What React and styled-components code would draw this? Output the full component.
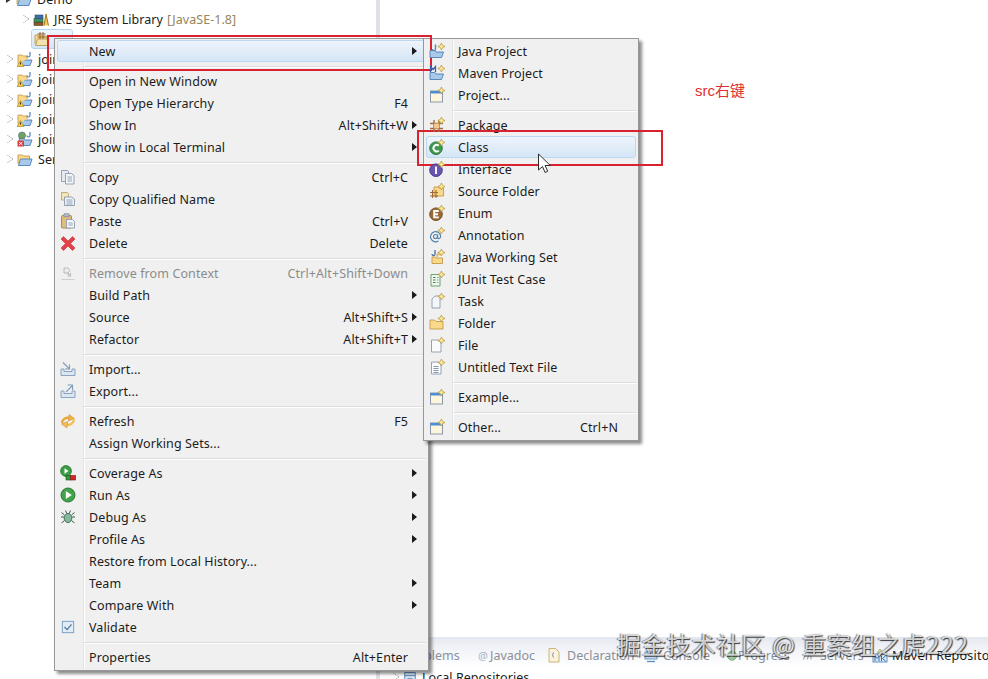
import React from "react";
import styled, { createGlobalStyle } from "styled-components";

const GlobalStyle = createGlobalStyle`
  html, body {
    margin: 0;
    padding: 0;
    background: #fff;
  }
  body {
    font-family: "Noto Sans", "Noto Sans CJK SC", sans-serif;
    font-size: 12.5px;
    color: #1c1c1c;
  }
`;

const Workbench = styled.div`
  position: relative;
  display: flex;
  width: 988px;
  height: 679px;
  overflow: hidden;
  background: #fff;
`;

const TreePanel = styled.div`
  width: 376px;
  flex: none;
  margin-top: -11px;
`;

const TreeRow = styled.div`
  display: flex;
  align-items: center;
  height: 20px;
  padding-left: ${(p) => p.$indent}px;
  white-space: nowrap;
`;

const Twisty = styled.span`
  width: 0;
  height: 0;
  margin-right: 4px;
  border-left: 6px solid ${(p) => (p.$open ? "#333" : "#fff")};
  border-top: 4px solid transparent;
  border-bottom: 4px solid transparent;
  filter: ${(p) => (p.$open ? "none" : "drop-shadow(0 0 0.6px #6d6d6d) drop-shadow(0 0 0.4px #6d6d6d)")};
`;

const TreeLabel = styled.span`
  margin-left: 5px;
  font-size: 12.5px;
  letter-spacing: 0.05px;
`;

const Decoration = styled.span`
  margin-left: 4px;
  font-size: 12.5px;
  letter-spacing: 0.05px;
  color: #96865a;
`;

const SelectedBox = styled.div`
  display: flex;
  align-items: center;
  width: 42px;
  height: 20px;
  padding-left: 2px;
  box-sizing: border-box;
  border: 1px solid #b7d4ee;
  border-radius: 3px;
  background: linear-gradient(#eef6fd, #d4e7f8);
`;

const Sash = styled.div`
  width: 4px;
  flex: none;
  background: #dfe1e8;
`;

const RightColumn = styled.div`
  flex: 1;
  display: flex;
  flex-direction: column;
  min-width: 0;
`;

const Editor = styled.div`
  height: 637px;
  flex: none;
  padding: 81px 0 0 315px;
  box-sizing: border-box;
`;

const Note = styled.div`
  font-family: "Liberation Sans", "Noto Sans CJK SC", sans-serif;
  font-size: 15px;
  line-height: 19px;
  color: #e0312f;
`;

const ViewTabs = styled.div`
  height: 30px;
  flex: none;
  display: flex;
  align-items: center;
  padding: 6px 0 0 24px;
  box-sizing: border-box;
  background: linear-gradient(#e4e7f0 0, #eff1f6 30%, #ffffff 100%);
  white-space: nowrap;
`;

const ViewTab = styled.div`
  display: flex;
  align-items: center;
  flex: none;
  width: ${(p) => p.$width}px;
  gap: ${(p) => p.$gap ?? 4}px;
  font-size: 12.5px;
  letter-spacing: ${(p) => (p.$active ? "0.25px" : "0")};
  color: ${(p) => (p.$active ? "#1c1c1c" : "#8b909a")};
`;

const AtSign = styled.span`
  width: 11px;
  font-size: 11px;
  color: #a9b4c6;
`;

const ViewBody = styled.div`
  flex: 1;
  padding-left: 13px;
`;

const BodyRow = styled.div`
  display: flex;
  align-items: center;
  height: 18px;
  margin-top: 1px;
  white-space: nowrap;
`;

const Popup = styled.div`
  position: absolute;
  left: ${(p) => p.$left}px;
  top: 38px;
  width: ${(p) => p.$width}px;
  box-sizing: border-box;
  padding: 1px 2px 2px;
  background: #f0f0f0;
  border: 1px solid #979797;
  box-shadow: 3px 3px 3px rgba(0, 0, 0, 0.45);

  &::before {
    content: "";
    position: absolute;
    top: 1px;
    bottom: 1px;
    left: 28px;
    width: 1px;
    background: #e2e3e3;
    box-shadow: 1px 0 0 #fff;
  }
`;

const Item = styled.div`
  position: relative;
  display: grid;
  grid-template-columns: 20px 1fr auto;
  align-items: center;
  column-gap: 11px;
  height: 22px;
  box-sizing: border-box;
  padding-right: 17px;
  border: 1px solid ${(p) => (p.$active ? "#bcd7f0" : "transparent")};
  border-radius: 3px;
  background: ${(p) => (p.$active ? "linear-gradient(#eef4fb, #d5e6f7)" : "transparent")};
  color: ${(p) => (p.$disabled ? "#8c8c8c" : "#1c1c1c")};
  letter-spacing: 0.1px;
  white-space: nowrap;
`;

const IconCell = styled.span`
  display: flex;
  justify-content: center;
  align-items: center;
  z-index: 1;
`;

const Shortcut = styled.span`
  color: inherit;
`;

const Arrow = styled.span`
  position: absolute;
  right: 8px;
  top: 6px;
  width: 0;
  height: 0;
  border-left: 5px solid #1a1a1a;
  border-top: 4px solid transparent;
  border-bottom: 4px solid transparent;
`;

const Separator = styled.div`
  height: 8px;
  margin-left: 27px;
  position: relative;

  &::after {
    content: "";
    position: absolute;
    left: 0;
    right: 0;
    top: 4px;
    height: 1px;
    background: #dcdcdc;
    box-shadow: 0 1px 0 #fff;
  }
`;

const RedFrame = styled.div`
  position: absolute;
  left: ${(p) => p.$left}px;
  top: ${(p) => p.$top}px;
  width: ${(p) => p.$width}px;
  height: ${(p) => p.$height}px;
  box-sizing: border-box;
  border: 2px solid #d8222f;
`;

const Pointer = styled.svg`
  position: absolute;
  left: 537px;
  top: 153px;
`;

const Watermark = styled.div`
  position: absolute;
  left: 617px;
  top: 627px;
  font-family: "Noto Sans CJK SC", sans-serif;
  font-size: 24px;
  line-height: 34px;
  letter-spacing: 0.85px;
  white-space: nowrap;
  color: rgba(255, 255, 255, 0.75);
  text-shadow: 1px 1px 1px rgba(0, 0, 0, 0.75), -1px 0 1px rgba(0, 0, 0, 0.5);
`;

const GlyphSvg = styled.svg`
  display: block;
  flex: none;
`;

const Glyph = ({ children, size = 16 }) => (
  <GlyphSvg width={size} height={size} viewBox="0 0 16 16">
    {children}
  </GlyphSvg>
);

const Spark = () => (
  <path
    d="M12.4 0l1.1 2.4 2.5 1.1-2.5 1.1-1.1 2.4-1.1-2.4-2.5-1.1 2.5-1.1z"
    fill="#fcec9c"
    stroke="#b8922f"
    strokeWidth="0.7"
  />
);

const BlueFolder = () => (
  <path
    d="M1 14.5V7.5h5l1 1.5h7.5l-2 5.5z"
    fill="#a9c9ea"
    stroke="#4f7fb5"
    strokeWidth="0.9"
  />
);

const OrangeFolder = ({ d = "M1 14V5h4.5l1.5 1.5h7V14z" }) => (
  <path d={d} fill="#fbd98b" stroke="#c39a47" strokeWidth="0.9" />
);

const PageShape = ({ fill = "#fafbfd", stroke = "#8c98ab" }) => (
  <path d="M2.5 15V3h6.5l3 3v9z" fill={fill} stroke={stroke} strokeWidth="0.9" />
);

const WindowShape = () => (
  <g>
    <rect x="1.5" y="4" width="12" height="11" fill="#fdf6dc" stroke="#7f8ea3" strokeWidth="0.9" />
    <rect x="1.5" y="4" width="12" height="2.5" fill="#4c8fd8" />
  </g>
);

const Badge = ({ fill, stroke, mark }) => (
  <g>
    <circle cx="7" cy="9.2" r="6.3" fill={fill} stroke={stroke} strokeWidth="0.9" />
    <path d={mark} fill="none" stroke="#fff" strokeWidth="1.9" />
    <Spark />
  </g>
);

const WarnFolder = () => (
  <Glyph>
    <path d="M1 7.5h5l1 1.5h8l-2 5.5H4z" fill="#a9c9ea" stroke="#4f7fb5" strokeWidth="0.9" />
    <path d="M1 13V4h4l1 1h4v3" fill="#fbd98b" stroke="#c39a47" strokeWidth="0.8" />
    <path d="M13 1v3.5a1.5 1.5 0 0 1-3 0" fill="none" stroke="#4f7fb5" strokeWidth="1.2" />
    <path d="M3.5 9.5L7 15.5H0z" fill="#f6c845" stroke="#a07a18" strokeWidth="0.6" />
    <path d="M3.5 11.5v2" stroke="#222" strokeWidth="0.9" />
  </Glyph>
);

const ErrorGlobeFolder = () => (
  <Glyph>
    <path d="M2 7.5h5l1 1.5h7l-2 5.5H4z" fill="#a9c9ea" stroke="#4f7fb5" strokeWidth="0.9" />
    <circle cx="5" cy="4.5" r="3.5" fill="#6fa35e" stroke="#55708c" strokeWidth="0.7" />
    <path d="M13 1v3.5a1.5 1.5 0 0 1-3 0" fill="none" stroke="#4f7fb5" strokeWidth="1.2" />
    <rect x="0.5" y="9.5" width="6.5" height="6" fill="#d93a3a" />
    <path d="M2 11l3.5 3M5.5 11L2 14" stroke="#fff" strokeWidth="1" />
  </Glyph>
);

const PlainProject = () => (
  <Glyph>
    <path d="M1 13V4h4.5l1 1h6v3" fill="#fbd98b" stroke="#c39a47" strokeWidth="0.9" />
    <path d="M1.5 14.5l2-6.5h11.5l-2 6.5z" fill="#a9c9ea" stroke="#4f7fb5" strokeWidth="0.9" />
  </Glyph>
);

const LibraryBooks = () => (
  <Glyph>
    <rect x="1" y="11" width="9" height="3.5" fill="#8a5a2b" stroke="#5d3b19" strokeWidth="0.6" />
    <rect x="1" y="7.5" width="9" height="3.5" fill="#3f8f5f" stroke="#28603f" strokeWidth="0.6" />
    <rect x="2" y="4" width="8" height="3.5" fill="#3d6ea8" stroke="#294a73" strokeWidth="0.6" />
    <path d="M11 14.5L13 3l2.5 11.5" fill="#f3c655" stroke="#a27a1d" strokeWidth="1" />
  </Glyph>
);

const PackageFolder = () => (
  <Glyph>
    <path d="M1 13V4h4.5l1 1h6v3" fill="#fbd98b" stroke="#c39a47" strokeWidth="0.9" />
    <path d="M1.5 14.5l2-6.5h11.5l-2 6.5z" fill="#f4e2ae" stroke="#b49a5b" strokeWidth="0.9" />
    <path d="M6 1v7M9 1v7M3.5 3h8M3.5 6h8" stroke="#8a5a2b" strokeWidth="0.9" />
  </Glyph>
);

const icons = {
  javaProject: (
    <Glyph>
      <BlueFolder />
      <path d="M6.5 1.5v4.5a1.6 1.6 0 0 1-3.2 0" fill="none" stroke="#5782b4" strokeWidth="1.4" />
      <Spark />
    </Glyph>
  ),
  mavenProject: (
    <Glyph>
      <BlueFolder />
      <path d="M1.5 7V1.5l2.5 3 2.5-3V7" fill="none" stroke="#3f5fa8" strokeWidth="1.3" />
      <Spark />
    </Glyph>
  ),
  window: (
    <Glyph>
      <WindowShape />
      <Spark />
    </Glyph>
  ),
  package: (
    <Glyph>
      <path d="M5 3v12M10 3v12M1 6.5h13M1 11.5h13" stroke="#9f6b3a" strokeWidth="1.4" />
      <rect x="5" y="6.5" width="5" height="5" fill="#f2c88c" />
      <Spark />
    </Glyph>
  ),
  classFile: <Glyph><Badge fill="#3f9a4f" stroke="#2a6f38" mark="M9.8 6.8A3.2 3.2 0 1 0 9.8 11.6" /></Glyph>,
  interfaceFile: <Glyph><Badge fill="#6a55b0" stroke="#46368a" mark="M7 5.5v7.4" /></Glyph>,
  enumFile: <Glyph><Badge fill="#9c6a34" stroke="#6f4720" mark="M9.8 6H5.2v6.4h4.6M5.2 9.2h3.8" /></Glyph>,
  sourceFolder: (
    <Glyph>
      <OrangeFolder d="M5 13V4h3.5l1 1h5v8z" />
      <path d="M3.5 7v8M7 7v8M1 9.5h8M1 13h8" stroke="#9f6b3a" strokeWidth="1.1" />
      <Spark />
    </Glyph>
  ),
  annotation: (
    <Glyph>
      <circle cx="6.5" cy="9.5" r="2" fill="none" stroke="#4f7fa8" strokeWidth="1.1" />
      <path d="M8.7 7.5v3.2c0 1.6 3 1 3-1.5A5.1 5.1 0 1 0 9.4 14" fill="none" stroke="#4f7fa8" strokeWidth="1.1" />
      <Spark />
    </Glyph>
  ),
  workingSet: (
    <Glyph>
      <OrangeFolder d="M3 14.5V8h3l1 1h6.5v5.5z" />
      <path d="M6 1v4a1.5 1.5 0 0 1-3 0" fill="none" stroke="#46709f" strokeWidth="1.3" />
      <path d="M8 8V5h3l1 1" fill="#fbd98b" stroke="#c39a47" strokeWidth="0.8" />
      <Spark />
    </Glyph>
  ),
  junit: (
    <Glyph>
      <path d="M2 15V3.5h9V15z" fill="#eef6ee" stroke="#5b9a63" strokeWidth="0.9" />
      <path d="M4 6.5h2.5M4 9h2.5M4 11.5h2.5" stroke="#3d8a49" strokeWidth="1.1" />
      <path d="M8 6.5h1.5M8 9h1.5M8 11.5h1.5" stroke="#8a98a8" strokeWidth="1" />
      <Spark />
    </Glyph>
  ),
  task: (
    <Glyph>
      <path d="M3 15V6l3-3h5v12z" fill="#f4f6fa" stroke="#8c98ab" strokeWidth="0.9" />
      <Spark />
    </Glyph>
  ),
  folder: (
    <Glyph>
      <OrangeFolder />
      <Spark />
    </Glyph>
  ),
  file: (
    <Glyph>
      <PageShape />
      <Spark />
    </Glyph>
  ),
  textFile: (
    <Glyph>
      <PageShape />
      <path d="M4.5 7.5h5M4.5 9.5h5M4.5 11.5h5M4.5 13.5h5" stroke="#7a8ca3" strokeWidth="0.9" />
      <Spark />
    </Glyph>
  ),
  copy: (
    <Glyph>
      <path d="M1.5 12.5V1.5h6l1 1v10z" fill="#e5ebf2" stroke="#8a99ab" strokeWidth="0.9" />
      <path d="M5.5 15V4.5h6l2.5 2V15z" fill="#f4f7fa" stroke="#8a99ab" strokeWidth="0.9" />
      <path d="M7.5 8h4.5M7.5 10h4.5M7.5 12h4.5" stroke="#8a99ab" strokeWidth="0.9" />
    </Glyph>
  ),
  copyQualified: (
    <Glyph>
      <path d="M1.5 9V1.5h6l1 1V9z" fill="#f2e6bf" stroke="#b8a66d" strokeWidth="0.9" />
      <path d="M4.5 14.5V6h7l3 2v6.5z" fill="#eef3f8" stroke="#8a99ab" strokeWidth="0.9" />
      <path d="M6.5 9h6M6.5 11h6M6.5 13h6" stroke="#8a99ab" strokeWidth="0.9" />
    </Glyph>
  ),
  paste: (
    <Glyph>
      <rect x="1.5" y="2.5" width="10" height="12.5" rx="1" fill="#e0be7a" stroke="#a48643" strokeWidth="0.9" />
      <rect x="4" y="0.8" width="5" height="3" fill="#b4bcc6" stroke="#7d8590" strokeWidth="0.7" />
      <path d="M6.5 6.5h6l2 2v6.5h-8z" fill="#f5f8fb" stroke="#8a99ab" strokeWidth="0.9" />
      <path d="M8.3 10h4.5M8.3 12h4.5" stroke="#8a99ab" strokeWidth="0.9" />
    </Glyph>
  ),
  remove: (
    <Glyph>
      <path d="M1.5 14.5h13" stroke="#cfcfcf" strokeWidth="1" />
      <path d="M4 3h4l2 2.5L8 8H4z" fill="#ececec" stroke="#b4b4b4" strokeWidth="0.9" />
      <path d="M7 8l3.5 3M10.5 8v3H7.5" fill="none" stroke="#bdbdbd" strokeWidth="1.1" />
    </Glyph>
  ),
  delete: (
    <Glyph>
      <path d="M3.5 1.5L8 6l4.5-4.5L15 4l-4.5 4.5L15 13l-2.5 2.5L8 11l-4.5 4.5L1 13l4.5-4.5L1 4z" fill="#e5404a" stroke="#c13038" strokeWidth="0.6" />
    </Glyph>
  ),
  importFile: (
    <Glyph>
      <path d="M1 8v6.5h14V8h-3v2.5H4V8z" fill="#dbe6f1" stroke="#7f9cbb" strokeWidth="0.9" />
      <path d="M3 1.5l6 6M9.5 3.5v4.5H5" fill="none" stroke="#7f9cbb" strokeWidth="1.1" />
    </Glyph>
  ),
  exportFile: (
    <Glyph>
      <path d="M1 8v6.5h14V8h-3v2.5H4V8z" fill="#dbe6f1" stroke="#7f9cbb" strokeWidth="0.9" />
      <path d="M6 9l6-6M7.5 2h5v5" fill="none" stroke="#7f9cbb" strokeWidth="1.1" />
    </Glyph>
  ),
  refresh: (
    <Glyph>
      <path d="M2 10C2 6.5 6 4 9.5 5" fill="none" stroke="#e8a838" strokeWidth="2.4" />
      <path d="M9 1.5l5.5 4-6 2.5z" fill="#f0b545" stroke="#c08428" strokeWidth="0.5" />
      <path d="M14 6.5C14 10 10 12.5 6.5 11.5" fill="none" stroke="#f2bf58" strokeWidth="2.4" />
      <path d="M7 15L1.5 11l6-2.5z" fill="#f2bf58" stroke="#c08428" strokeWidth="0.5" />
    </Glyph>
  ),
  coverage: (
    <Glyph>
      <circle cx="6" cy="6" r="5.4" fill="#3aa045" stroke="#25702e" strokeWidth="0.8" />
      <path d="M4.5 3.2l4 2.8-4 2.8z" fill="#fff" />
      <rect x="6" y="10.5" width="4.5" height="4.5" fill="#2f9a3c" stroke="#14541e" strokeWidth="0.6" />
      <rect x="10.5" y="10.5" width="5" height="4.5" fill="#d42828" stroke="#6b1414" strokeWidth="0.6" />
    </Glyph>
  ),
  run: (
    <Glyph>
      <circle cx="8" cy="8" r="7" fill="#41a44b" stroke="#276f31" strokeWidth="0.9" />
      <path d="M5.8 4l6 4-6 4z" fill="#fff" />
    </Glyph>
  ),
  debug: (
    <Glyph>
      <ellipse cx="8" cy="9" rx="3.8" ry="4.6" fill="#85b89a" stroke="#3b6a55" strokeWidth="0.9" />
      <path d="M1 8h3M12 8h3M1.5 3.5l3 2.5M14.5 3.5l-3 2.5M1.5 14l3-2.5M14.5 14l-3-2.5M5.5 1.5l1.3 3M10.5 1.5L9.2 4.5" stroke="#3b5d52" strokeWidth="1" />
    </Glyph>
  ),
  check: (
    <Glyph size={14}>
      <rect x="1.5" y="1.5" width="13" height="13" fill="#e0ecf8" stroke="#6f97c1" strokeWidth="1" />
      <path d="M4 8l3 3 5-6" fill="none" stroke="#4d7299" strokeWidth="1.3" />
    </Glyph>
  ),
  tabDeclaration: (
    <Glyph>
      <path d="M2 15V1.5h6.5L12 5v10z" fill="#fbf3de" stroke="#c8ab6b" strokeWidth="0.9" />
      <path d="M7 5.5C5 5.5 7 8 5 8c2 0 0 2.5 2 2.5" fill="none" stroke="#8a99ab" strokeWidth="1" />
    </Glyph>
  ),
  tabConsole: (
    <Glyph>
      <rect x="2" y="5" width="12" height="7" fill="#cfe2f5" stroke="#5b8fc2" strokeWidth="0.9" />
      <path d="M4 14.5h8" stroke="#5b8fc2" strokeWidth="1.3" />
    </Glyph>
  ),
  tabProgress: (
    <Glyph size={12}>
      <circle cx="8" cy="9" r="6" fill="#9cc79b" stroke="#6f9f70" strokeWidth="1" />
      <path d="M6.5 6l4 3-4 3z" fill="#fff" />
    </Glyph>
  ),
  tabServers: (
    <Glyph size={12}>
      <path d="M2 14l3-9M7 14l3-9M12 14V5" stroke="#9aa0a8" strokeWidth="1.4" />
    </Glyph>
  ),
  tabMaven: (
    <Glyph>
      <rect x="1" y="7" width="14" height="8" fill="#dbe9f7" stroke="#3e78b5" strokeWidth="0.8" />
      <path d="M3 14V9l2 2.5L7 9v5M9.5 9v5M13.5 9l-3 2.5 3 2.5" fill="none" stroke="#2e639c" strokeWidth="0.9" />
      <path d="M5 6l3-4 3 4" fill="#e7e2a0" stroke="#9aa455" strokeWidth="0.8" />
    </Glyph>
  ),
  repository: (
    <Glyph size={14}>
      <rect x="2" y="3" width="12" height="12" fill="#dbe9f7" stroke="#4a7fb5" strokeWidth="1" />
      <path d="M2 6.5h12M5 10h6" stroke="#4a7fb5" strokeWidth="1.1" />
    </Glyph>
  ),
};

const SEP = { sep: true };

const mainMenu = [
  { label: "New", arrow: true, active: true },
  SEP,
  { label: "Open in New Window" },
  { label: "Open Type Hierarchy", key: "F4" },
  { label: "Show In", key: "Alt+Shift+W", arrow: true },
  { label: "Show in Local Terminal", arrow: true },
  SEP,
  { label: "Copy", key: "Ctrl+C", icon: "copy" },
  { label: "Copy Qualified Name", icon: "copyQualified" },
  { label: "Paste", key: "Ctrl+V", icon: "paste" },
  { label: "Delete", key: "Delete", icon: "delete" },
  SEP,
  { label: "Remove from Context", key: "Ctrl+Alt+Shift+Down", icon: "remove", disabled: true },
  { label: "Build Path", arrow: true },
  { label: "Source", key: "Alt+Shift+S", arrow: true },
  { label: "Refactor", key: "Alt+Shift+T", arrow: true },
  SEP,
  { label: "Import...", icon: "importFile" },
  { label: "Export...", icon: "exportFile" },
  SEP,
  { label: "Refresh", key: "F5", icon: "refresh" },
  { label: "Assign Working Sets..." },
  SEP,
  { label: "Coverage As", icon: "coverage", arrow: true },
  { label: "Run As", icon: "run", arrow: true },
  { label: "Debug As", icon: "debug", arrow: true },
  { label: "Profile As", arrow: true },
  { label: "Restore from Local History..." },
  { label: "Team", arrow: true },
  { label: "Compare With", arrow: true },
  { label: "Validate", icon: "check" },
  SEP,
  { label: "Properties", key: "Alt+Enter" },
];

const newMenu = [
  { label: "Java Project", icon: "javaProject" },
  { label: "Maven Project", icon: "mavenProject" },
  { label: "Project...", icon: "window" },
  SEP,
  { label: "Package", icon: "package" },
  { label: "Class", icon: "classFile", active: true },
  { label: "Interface", icon: "interfaceFile" },
  { label: "Source Folder", icon: "sourceFolder" },
  { label: "Enum", icon: "enumFile" },
  { label: "Annotation", icon: "annotation" },
  { label: "Java Working Set", icon: "workingSet" },
  { label: "JUnit Test Case", icon: "junit" },
  { label: "Task", icon: "task" },
  { label: "Folder", icon: "folder" },
  { label: "File", icon: "file" },
  { label: "Untitled Text File", icon: "textFile" },
  SEP,
  { label: "Example...", icon: "window" },
  SEP,
  { label: "Other...", key: "Ctrl+N", icon: "window" },
];

const Menu = ({ items, left, width }) => (
  <Popup $left={left} $width={width}>
    {items.map((item, i) =>
      item.sep ? (
        <Separator key={i} />
      ) : (
        <Item key={i} $active={item.active} $disabled={item.disabled}>
          <IconCell>{item.icon && icons[item.icon]}</IconCell>
          <span>{item.label}</span>
          <Shortcut>{item.key}</Shortcut>
          {item.arrow && <Arrow />}
        </Item>
      )
    )}
  </Popup>
);

const App = () => {
  return (
    <Workbench>
      <GlobalStyle />
      <TreePanel>
        <TreeRow $indent={6}>
          <Twisty $open />
          <PlainProject />
          <TreeLabel>Demo</TreeLabel>
        </TreeRow>
        <TreeRow $indent={23}>
          <Twisty />
          <LibraryBooks />
          <TreeLabel>JRE System Library</TreeLabel>
          <Decoration>[JavaSE-1.8]</Decoration>
        </TreeRow>
        <TreeRow $indent={31}>
          <SelectedBox>
            <PackageFolder />
          </SelectedBox>
        </TreeRow>
        {[0, 1, 2, 3].map((n) => (
          <TreeRow key={n} $indent={7}>
            <Twisty />
            <WarnFolder />
            <TreeLabel>join</TreeLabel>
          </TreeRow>
        ))}
        <TreeRow $indent={7}>
          <Twisty />
          <ErrorGlobeFolder />
          <TreeLabel>join</TreeLabel>
        </TreeRow>
        <TreeRow $indent={7}>
          <Twisty />
          <PlainProject />
          <TreeLabel>Servers</TreeLabel>
        </TreeRow>
      </TreePanel>
      <Sash />
      <RightColumn>
        <Editor>
          <Note>src右键</Note>
        </Editor>
        <ViewTabs>
          <ViewTab $width={74}>Problems</ViewTab>
          <ViewTab $width={69} $gap={1}>
            <AtSign>@</AtSign>Javadoc
          </ViewTab>
          <ViewTab $width={96}>
            {icons.tabDeclaration}Declaration
          </ViewTab>
          <ViewTab $width={83}>
            {icons.tabConsole}Console
          </ViewTab>
          <ViewTab $width={76} $gap={0}>
            {icons.tabProgress}Progress
          </ViewTab>
          <ViewTab $width={70} $gap={6}>
            {icons.tabServers}Servers
          </ViewTab>
          <ViewTab $active $gap={4}>
            {icons.tabMaven}Maven Repositories
          </ViewTab>
        </ViewTabs>
        <ViewBody>
          <BodyRow>
            <Twisty />
            {icons.repository}
            <TreeLabel>Local Repositories</TreeLabel>
          </BodyRow>
        </ViewBody>
      </RightColumn>
      <Menu items={mainMenu} left={54} width={375} />
      <Menu items={newMenu} left={423} width={216} />
      <RedFrame $left={47} $top={35} $width={385} $height={36} />
      <RedFrame $left={417} $top={130} $width={246} $height={36} />
      <Pointer width="14" height="22" viewBox="0 0 14 22">
        <path
          d="M1.5 1v16l4-3.5 2.6 6 2.6-1.2-2.6-5.8h5.2z"
          fill="#fff"
          stroke="#2a2a2a"
          strokeWidth="1"
        />
      </Pointer>
      <Watermark>掘金技术社区 @ 重案组之虎222</Watermark>
    </Workbench>
  );
};

export default App;
